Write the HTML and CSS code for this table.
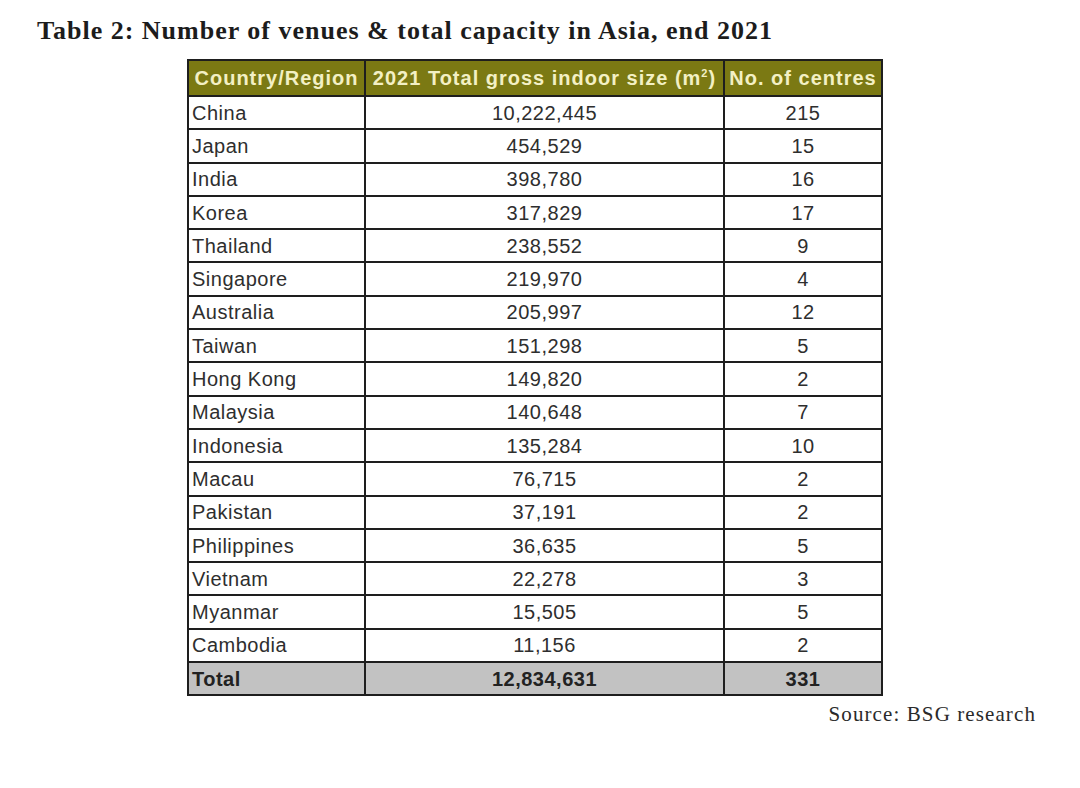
FILE: index.html
```html
<!DOCTYPE html>
<html>
<head>
<meta charset="utf-8">
<link rel="stylesheet" href="styles.css">
</head>
<body>
<div class="page">
  <h1 class="title">Table 2: Number of venues &amp; total capacity in Asia, end 2021</h1>
  <div class="table-wrap">
    <table class="data">
      <colgroup>
        <col class="c1"><col class="c2"><col class="c3">
      </colgroup>
      <thead>
        <tr>
          <th>Country/Region</th>
          <th>2021 Total gross indoor size (m<sup>2</sup>)</th>
          <th>No. of centres</th>
        </tr>
      </thead>
      <tbody>
        <tr><td class="left">China</td><td>10,222,445</td><td>215</td></tr>
        <tr><td class="left">Japan</td><td>454,529</td><td>15</td></tr>
        <tr><td class="left">India</td><td>398,780</td><td>16</td></tr>
        <tr><td class="left">Korea</td><td>317,829</td><td>17</td></tr>
        <tr><td class="left">Thailand</td><td>238,552</td><td>9</td></tr>
        <tr><td class="left">Singapore</td><td>219,970</td><td>4</td></tr>
        <tr><td class="left">Australia</td><td>205,997</td><td>12</td></tr>
        <tr><td class="left">Taiwan</td><td>151,298</td><td>5</td></tr>
        <tr><td class="left">Hong Kong</td><td>149,820</td><td>2</td></tr>
        <tr><td class="left">Malaysia</td><td>140,648</td><td>7</td></tr>
        <tr><td class="left">Indonesia</td><td>135,284</td><td>10</td></tr>
        <tr><td class="left">Macau</td><td>76,715</td><td>2</td></tr>
        <tr><td class="left">Pakistan</td><td>37,191</td><td>2</td></tr>
        <tr><td class="left">Philippines</td><td>36,635</td><td>5</td></tr>
        <tr><td class="left">Vietnam</td><td>22,278</td><td>3</td></tr>
        <tr><td class="left">Myanmar</td><td>15,505</td><td>5</td></tr>
        <tr><td class="left">Cambodia</td><td>11,156</td><td>2</td></tr>
        <tr class="total"><td class="left">Total</td><td>12,834,631</td><td>331</td></tr>
      </tbody>
    </table>
  </div>
  <p class="source">Source: BSG research</p>
</div>
</body>
</html>
```

FILE: styles.css
```css
html, body {
  margin: 0;
  padding: 0;
  background: #ffffff;
}

.page {
  width: 1080px;
  height: 788px;
  padding-top: 15px;
  box-sizing: border-box;
}

.title {
  margin: 0 0 0 37px;
  font-family: "Liberation Serif", "Times New Roman", serif;
  font-weight: bold;
  font-size: 26px;
  letter-spacing: 1px;
  line-height: 32px;
  color: #1c1c1c;
}

.table-wrap {
  margin: 12px 0 0 187px;
}

.data {
  border-collapse: collapse;
  table-layout: fixed;
  width: 694px;
  font-family: "Liberation Sans", Arial, sans-serif;
  font-size: 20px;
  letter-spacing: 0.5px;
  color: #2e2e2e;
  border: 2px solid #1e1e1e;
}

.c1 { width: 177px; }
.c2 { width: 359px; }
.c3 { width: 158px; }

.data th,
.data td {
  border: 2px solid #1e1e1e;
  padding: 0 3px;
  text-align: center;
  white-space: nowrap;
}

.data th {
  background: #7b7913;
  color: #f3f0c4;
  font-weight: bold;
  height: 34px;
  letter-spacing: 1px;
  padding: 0;
}

.data th sup {
  font-size: 11px;
  line-height: 0;
  vertical-align: 8px;
}

.data td {
  height: 31.3px;
  line-height: 24px;
}

.data .left {
  text-align: left;
}

.data tr.total td {
  background: #c2c2c2;
  font-weight: bold;
  color: #222;
}

.source {
  margin: 6px 0 0 0;
  width: 1036px;
  text-align: right;
  font-family: "Liberation Serif", "Times New Roman", serif;
  font-size: 21px;
  letter-spacing: 1.1px;
  color: #2a2a2a;
}
```
